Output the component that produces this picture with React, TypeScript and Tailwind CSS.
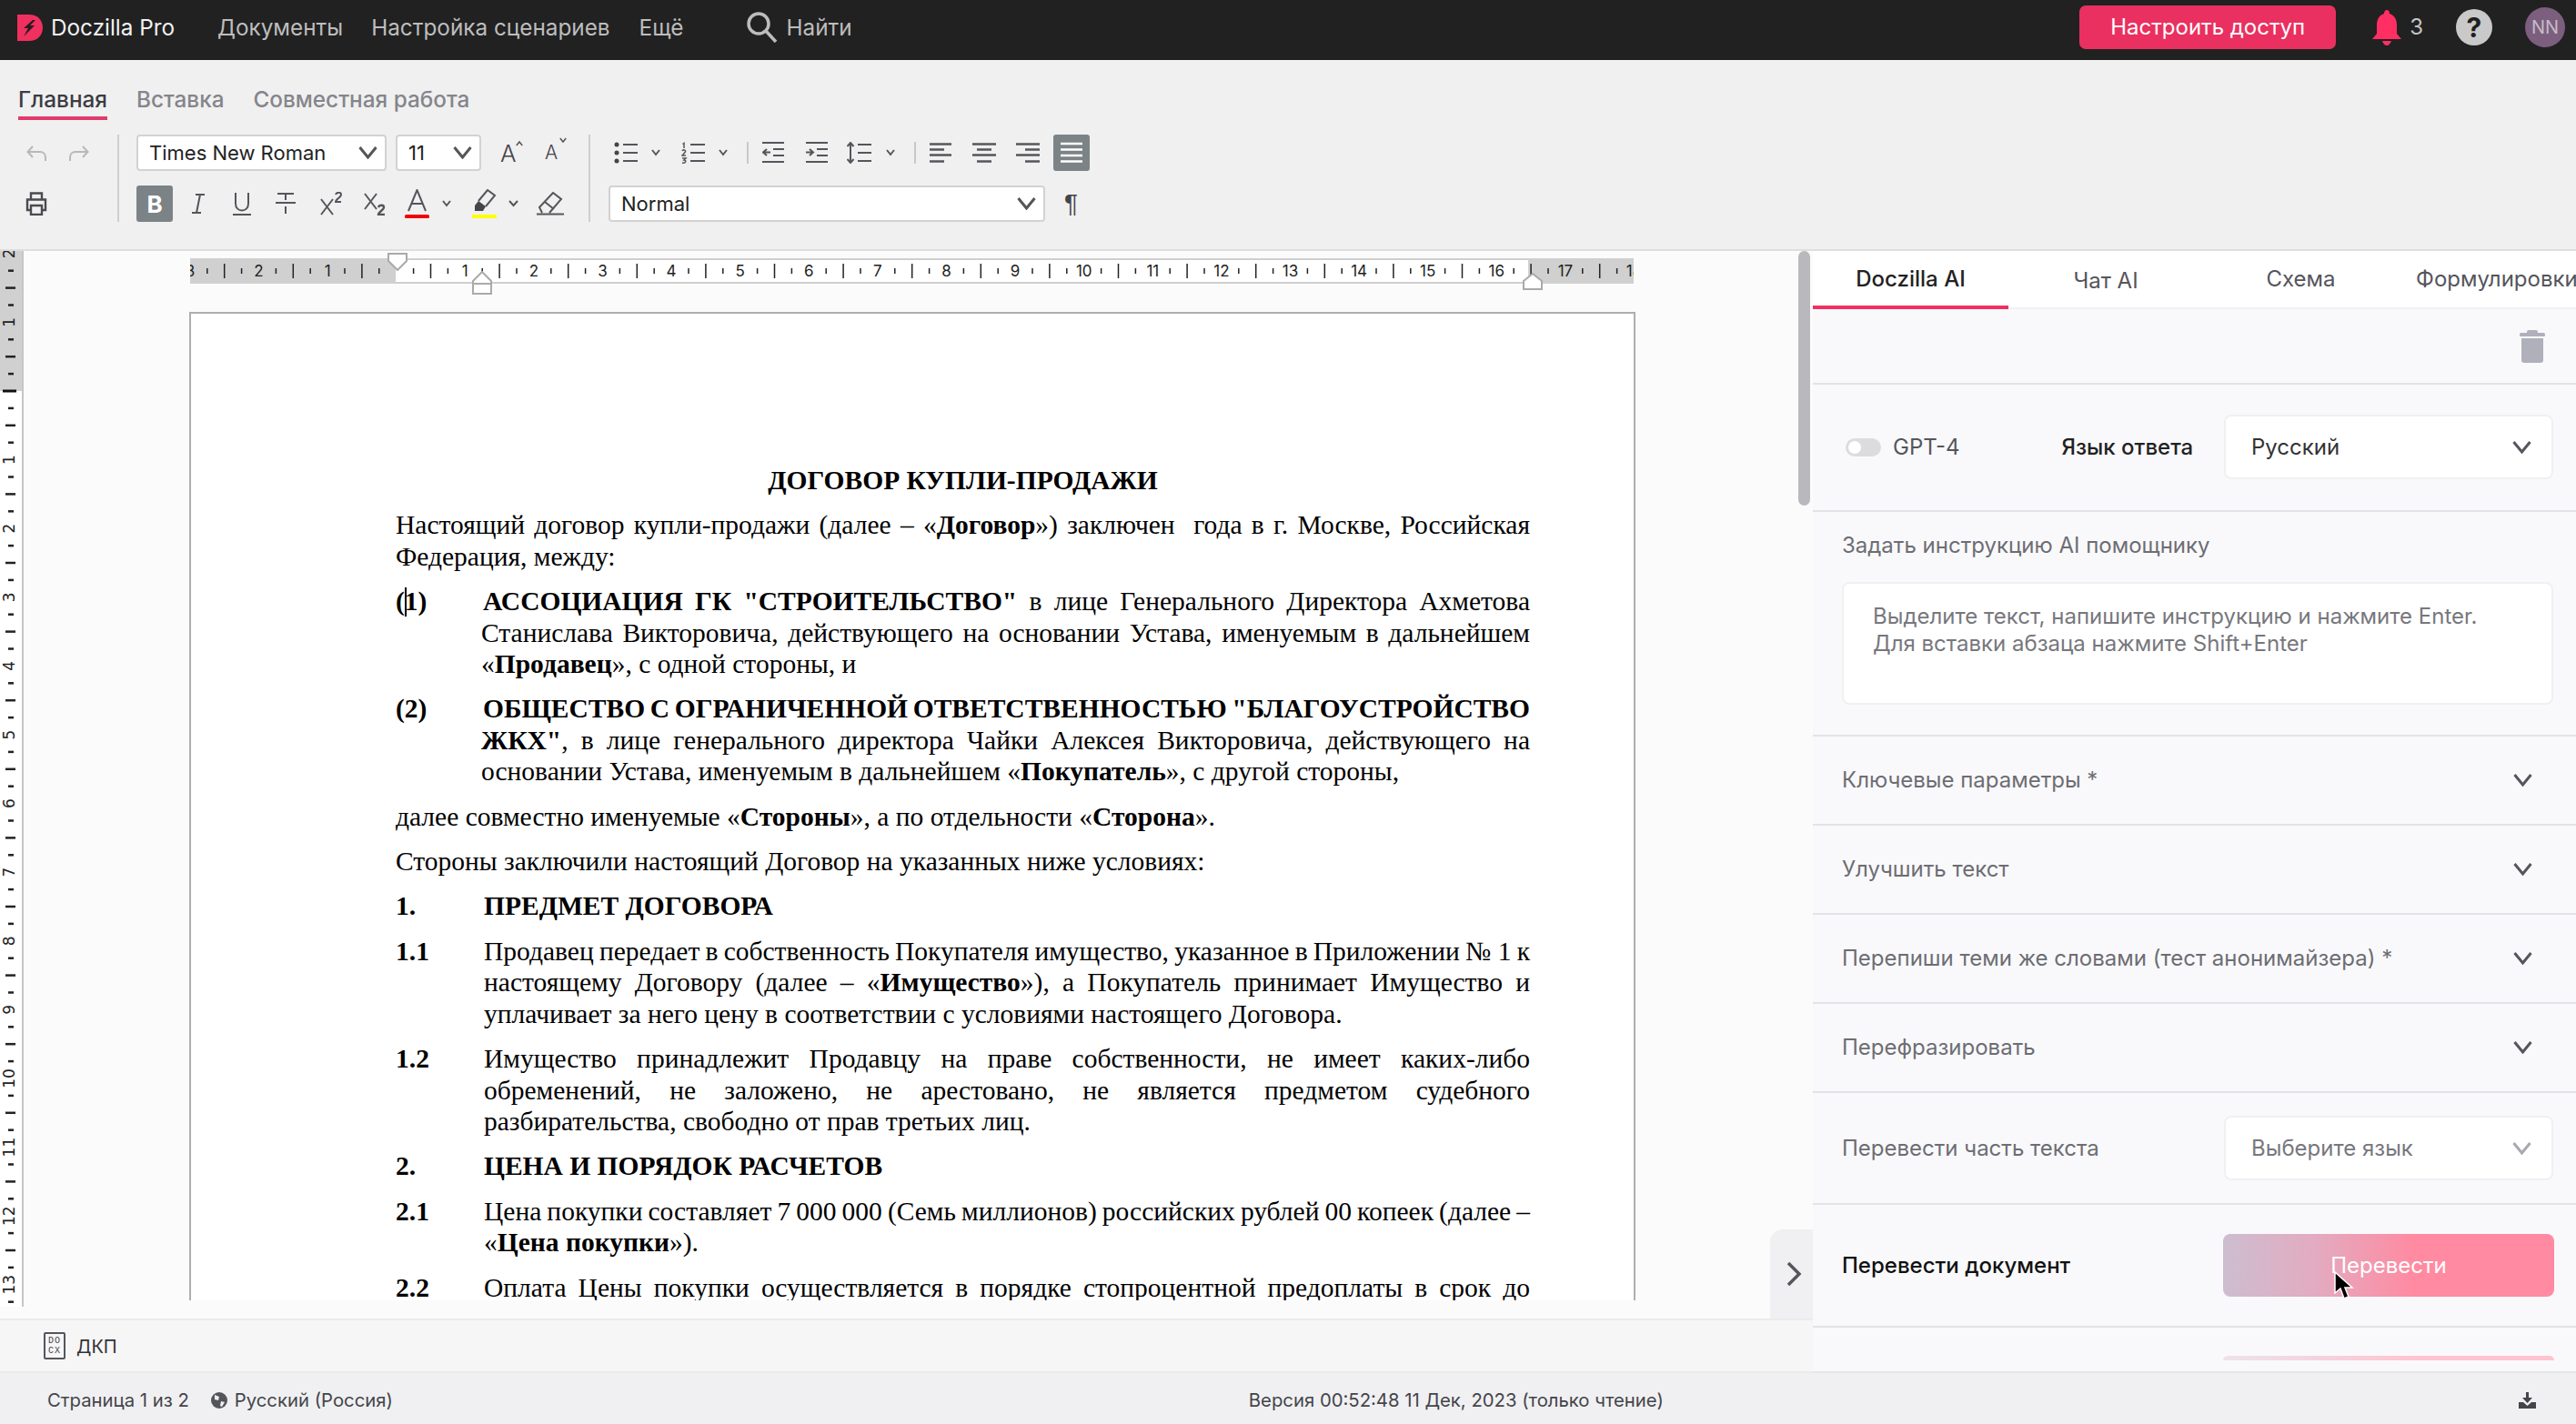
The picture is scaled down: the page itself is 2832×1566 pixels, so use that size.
import React from "react";

const Chev = ({ w = 10, h = 6, s = 2, c = "#555", className = "" }: { w?: number; h?: number; s?: number; c?: string; className?: string }) => (
  <svg width={w} height={h + 2} viewBox={`0 0 ${w} ${h + 2}`} className={className} fill="none">
    <path d={`M${s / 2} 1 L${w / 2} ${h} L${w - s / 2} 1`} stroke={c} strokeWidth={s} />
  </svg>
);

const Sel = ({ label, className = "" }: { label: string; className?: string }) => (
  <div className={`h-[40px] bg-white border-2 border-[#d2d2d2] rounded-[4px] flex items-center justify-between pl-[12px] pr-[8px] text-[22px] text-[#222] ${className}`}>
    <span>{label}</span>
    <Chev w={21} h={12} s={3} />
  </div>
);

const I = ({ w, h, ml, children, vb }: { w: number; h: number; ml: string; children: React.ReactNode; vb?: string }) => (
  <svg width={w} height={h} viewBox={vb ?? `0 0 ${w} ${h}`} fill="none" stroke="#55555c" strokeWidth="2" className={`shrink-0 ${ml}`}>
    {children}
  </svg>
);

const hTicks = () => {
  const out: React.ReactNode[] = [];
  const o = 226.7;
  for (let n = -3; n <= 18; n++) {
    const x = o + n * 75.6;
    if (n !== 0) {
      out.push(<text key={`n${n}`} x={x} y={20} textAnchor="middle" fontSize="17" fontFamily="Inter" fill="#222">{Math.abs(n)}</text>);
    }
    for (const f of [0.25, 0.5, 0.75]) {
      const tx = x + f * 75.6;
      const long = f === 0.5;
      out.push(<line key={`t${n}${f}`} x1={tx} x2={tx} y1={long ? 6 : 11} y2={long ? 22 : 17} stroke="#222" strokeWidth="1.5" />);
    }
  }
  return out;
};

const vTicks = () => {
  const out: React.ReactNode[] = [];
  const o = 154;
  for (let n = -2; n <= 14; n++) {
    const y = o + n * 75.6;
    if (n !== 0) {
      out.push(<text key={`n${n}`} x={0} y={0} transform={`translate(16 ${y}) rotate(-90)`} textAnchor="middle" fontSize="17" fontFamily="DejaVu Sans" fill="#222">{Math.abs(n)}</text>);
    } else {
      out.push(<line key="z" x1="3" x2="18" y1={y} y2={y} stroke="#111" strokeWidth="3" />);
    }
    for (const f of [0.25, 0.5, 0.75]) {
      const ty = y + f * 75.6;
      const long = f === 0.5;
      out.push(<line key={`t${n}${f}`} x1={long ? 6 : 9} x2={long ? 17 : 15} y1={ty} y2={ty} stroke="#222" strokeWidth="2.5" />);
    }
  }
  return out;
};

const J = ({ children }: { children: React.ReactNode }) => <div className="[text-align-last:justify] [word-spacing:-2.5px] whitespace-nowrap">{children}</div>;
const L = ({ children }: { children: React.ReactNode }) => <div className="whitespace-nowrap">{children}</div>;
const B = ({ children }: { children: React.ReactNode }) => <b className="font-bold">{children}</b>;

const Item = ({ n, wide = false, children }: { n: React.ReactNode; wide?: boolean; children: React.ReactNode }) => (
  <div className="flex mt-[15px]">
    <div className={`${wide ? "w-[97px]" : "w-[94px]"} shrink-0 font-bold`}>{n}</div>
    <div className="flex-1 min-w-0">{children}</div>
  </div>
);

const Acc = ({ label }: { label: string }) => (
  <div className="h-[98px] shrink-0 border-b-2 border-[#e3e3e7] flex items-center justify-between pl-[32px] pr-[48px] text-[24px] text-[#6d6d73]">
    <span>{label}</span>
    <Chev w={21} h={12} s={3} c="#55555c" />
  </div>
);

export default function App() {
  return (
    <div className="w-[2832px] h-[1566px] overflow-hidden flex flex-col bg-[#f0f0f2] [font-family:Inter,sans-serif] relative">
      {/* Header */}
      <header className="h-[66px] shrink-0 bg-[#212121] flex items-center pl-[19px] pr-[12px] pb-[6px]">
        <svg width="28" height="29" viewBox="0 0 28 29" className="shrink-0">
          <path d="M0 0 H13 C22 0 28 6 28 14.5 C28 23 22 29 13 29 H0 Z" fill="#f0305f" />
          <path d="M17 6 L7 15 L12 15 L7 24 L19 12 L14 12 L20 6 Z" fill="#2a1a1e" />
        </svg>
        <span className="ml-[9px] text-[24.3px] text-[#f2f2f2]">Doczilla Pro</span>
        <span className="ml-[47px] text-[24.3px] text-[#bdbdbd]">Документы</span>
        <span className="ml-[31px] text-[24.3px] text-[#bdbdbd]">Настройка сценариев</span>
        <span className="ml-[32px] text-[24.3px] text-[#bdbdbd]">Ещё</span>
        <svg width="36" height="34" viewBox="0 0 36 34" fill="none" stroke="#bdbdbd" strokeWidth="3.5" className="ml-[69px]">
          <circle cx="14" cy="13" r="11" />
          <path d="M22 21 L33 33" />
        </svg>
        <span className="ml-[8px] text-[24.3px] text-[#bdbdbd]">Найти</span>
        <div className="ml-auto h-[48px] w-[282px] bg-[#ea3060] rounded-[7px] flex items-center justify-center text-[24px] text-white">Настроить доступ</div>
        <svg width="32" height="39" viewBox="0 0 32 39" className="ml-[40px] shrink-0">
          <path d="M16 0 C18 0 19 2 19 4 C25 6 27 11 27 17 V26 L32 32 H0 L5 26 V17 C5 11 7 6 13 4 C13 2 14 0 16 0 Z" fill="#ff2f63" />
          <path d="M11 34 H21 C20 37 18 39 16 39 C14 39 12 37 11 34 Z" fill="#ff2f63" />
        </svg>
        <span className="ml-[9px] text-[24px] text-[#c4c4c4]">3</span>
        <div className="ml-[36px] w-[40px] h-[40px] rounded-full bg-[#c9c9c9] flex items-center justify-center text-[30px] font-bold text-[#1f1f1f]">?</div>
        <div className="ml-[36px] w-[44px] h-[44px] rounded-full bg-[#7c5e7f] flex items-center justify-center text-[20px] text-[#c4bcc6]">NN</div>
      </header>

      {/* Toolbar */}
      <div className="h-[210px] shrink-0 bg-[#f0f0f0] border-b-2 border-[#dedede] flex flex-col">
        <div className="flex pl-[20px] pt-[28px] text-[24.3px] text-[#85858c] font-medium leading-[30px]">
          <span className="pb-[4px] border-b-4 border-[#e13b6e] text-[#3c3c44]">Главная</span>
          <span className="ml-[32px]">Вставка</span>
          <span className="ml-[32px]">Совместная работа</span>
        </div>
        <div className="flex mt-[16px] h-[96px]">
          <div className="w-[129px] flex flex-col gap-[16px]">
            <div className="h-[40px] flex items-center">
              <I w={22} h={20} ml="ml-[29px]"><g stroke="#b8b8bc"><path d="M7 3 L1.5 9 L7 15 M2 9 H15 C19 9 21 12 21 15 V19" /></g></I>
              <I w={22} h={20} ml="ml-[25px]"><g stroke="#b8b8bc"><path d="M15 3 L20.5 9 L15 15 M20 9 H7 C3 9 1 12 1 15 V19" /></g></I>
            </div>
            <div className="h-[40px] flex items-center">
              <I w={24} h={26} ml="ml-[28px]">
                <path d="M6 8 V1.5 H18 V8 M6 20 H2 V8.5 H22 V20 H18 M6 15 H18 V25 H6 Z" strokeWidth="2.4" stroke="#4a4a50" />
              </I>
            </div>
          </div>
          <div className="w-[2px] bg-[#cfcfcf]" />
          <div className="ml-[19px] w-[497px] flex flex-col gap-[16px]">
            <div className="h-[40px] flex items-center">
              <Sel label="Times New Roman" className="w-[275px]" />
              <Sel label="11" className="w-[94px] ml-[10px]" />
              <span className="ml-[21px] relative text-[26px] font-light text-[#44444a] w-[23px]">A<Chev w={8} h={5} s={1.5} className="absolute top-[5px] right-[-2px] rotate-180" /></span>
              <span className="ml-[26px] relative text-[21px] font-light text-[#44444a] w-[26px]">A<Chev w={8} h={5} s={1.5} className="absolute top-[-1px] right-[2px]" /></span>
            </div>
            <div className="h-[40px] flex items-center">
              <div className="w-[40px] h-[40px] rounded-[3px] bg-[#7b8387] flex items-center justify-center text-[26px] font-bold text-white">B</div>
              <I w={16} h={22} ml="ml-[20px]"><path d="M5 1 H15 M1 21 H11 M10 1 L6 21" /></I>
              <I w={20} h={26} ml="ml-[30px]"><path d="M3 1 V13 C3 23 17 23 17 13 V1 M0 25 H20" /></I>
              <I w={22} h={24} ml="ml-[27px]"><path d="M2 1 H20 M11 1 V8 M0 11 H22 M11 15 V23" /></I>
              <I w={24} h={26} ml="ml-[27px]"><path d="M1 8 L14 25 M14 8 L1 25 M17 3 C18 0 23 0 23 3 C23 6 17 8 17 11 H23" /></I>
              <I w={24} h={26} ml="ml-[24px]"><path d="M1 2 L14 19 M14 2 L1 19" /><path d="M16 17 C17 14 22 14 22 17 C22 20 16 22 16 25 H23" strokeWidth="2.4" /></I>
              <svg width="27" height="32" viewBox="0 0 27 32" fill="none" className="ml-[21px] shrink-0">
                <path d="M4 24 L13.5 1 L23 24 M7 16 H20" stroke="#55555c" strokeWidth="2" />
                <rect x="0" y="28" width="27" height="4" rx="1.5" fill="#f00000" />
              </svg>
              <Chev className="ml-[14px]" w={10} h={6} />
              <svg width="27" height="32" viewBox="0 0 27 32" fill="none" className="ml-[23px] shrink-0">
                <path d="M7 13 L17 1 L25 7 L15 19" stroke="#55555c" strokeWidth="2" />
                <path d="M3 18 L7 13 L15 19 L12 24 H3 Z" fill="#44444a" />
                <rect x="0" y="28" width="27" height="4" rx="1" fill="#ffff00" />
              </svg>
              <Chev className="ml-[13px]" w={11} h={6} />
              <svg width="30" height="26" viewBox="0 0 30 26" fill="none" stroke="#55555c" strokeWidth="2" className="ml-[20px] shrink-0">
                <path d="M6 23 L3 17 L18 1 L27 8 L14 23 M9 11 L19 19 M0 24.5 H30" />
              </svg>
            </div>
          </div>
          <div className="w-[2px] bg-[#cfcfcf]" />
          <div className="ml-[20px] flex flex-col gap-[16px]">
            <div className="h-[40px] flex items-center">
              <I w={26} h={24} ml="ml-[6px]">
                <circle cx="3" cy="3" r="2.5" fill="#44444a" stroke="none" />
                <circle cx="3" cy="12" r="2.5" fill="#44444a" stroke="none" />
                <circle cx="3" cy="21" r="2.5" fill="#44444a" stroke="none" />
                <path d="M10 3 H26 M10 12 H26 M10 21 H26" />
              </I>
              <Chev className="ml-[15px]" w={10} h={6} />
              <svg width="26" height="24" viewBox="0 0 26 24" fill="none" stroke="#55555c" strokeWidth="2" className="ml-[23px] shrink-0">
                <path d="M10 3 H26 M10 12 H26 M10 21 H26" />
                <path d="M1.5 2.5 L3 1.5 V7" strokeWidth="1.5" />
                <path d="M1 10 C2 8 5 9 4.5 11 L1 15 H5" strokeWidth="1.5" />
                <path d="M1 18 H5 L3 20 C6 20 5 24 1 23" strokeWidth="1.5" />
              </svg>
              <Chev className="ml-[15px]" w={10} h={6} />
              <div className="ml-[21px] w-[2px] h-[24px] bg-[#c8c8c8]" />
              <I w={24} h={24} ml="ml-[15px]"><path d="M0 1 H24 M12 8 H24 M12 15 H24 M0 22 H24 M9 11.5 H1 M5 8 L1 11.5 L5 15" /></I>
              <I w={24} h={24} ml="ml-[24px]"><path d="M0 1 H24 M12 8 H24 M12 15 H24 M0 22 H24 M0 11.5 H8 M4 8 L8 11.5 L4 15" /></I>
              <I w={27} h={24} ml="ml-[21px]"><path d="M4 1 V23 M0.5 5 L4 1 L7.5 5 M0.5 19 L4 23 L7.5 19 M12 3 H27 M12 12 H27 M12 21 H27" /></I>
              <Chev className="ml-[16px]" w={10} h={6} />
              <div className="ml-[21px] w-[2px] h-[24px] bg-[#c8c8c8]" />
              <I w={24} h={22} ml="ml-[15px]"><g strokeWidth="2.5"><path d="M0 1.5 H24 M0 7.5 H16 M0 13.5 H24 M0 20.5 H16" /></g></I>
              <I w={26} h={22} ml="ml-[23px]"><g strokeWidth="2.5"><path d="M0 1.5 H26 M5 7.5 H21 M0 13.5 H26 M5 20.5 H21" /></g></I>
              <I w={26} h={22} ml="ml-[22px]"><g strokeWidth="2.5"><path d="M0 1.5 H26 M10 7.5 H26 M0 13.5 H26 M10 20.5 H26" /></g></I>
              <div className="ml-[15px] w-[40px] h-[40px] rounded-[3px] bg-[#7b8387] flex items-center justify-center">
                <svg width="24" height="24" viewBox="0 0 24 24" fill="none" stroke="#fff" strokeWidth="2.5"><path d="M0 2 H24 M0 8.5 H24 M0 15 H24 M0 21.5 H24" /></svg>
              </div>
            </div>
            <div className="h-[40px] flex items-center">
              <Sel label="Normal" className="w-[480px]" />
              <span className="ml-[21px] text-[28px] text-[#44444a] [font-family:'Liberation_Sans',sans-serif]">¶</span>
            </div>
          </div>
        </div>
      </div>

      {/* Main */}
      <div className="flex-1 min-h-0 flex">
        <div className="flex-1 min-w-0 flex flex-col relative">
          <div className="flex-1 min-h-0 bg-[#fbfbfb] flex">
            <div className="w-[26px] shrink-0 h-[1161px] border-r-2 border-[#c6c6c6] relative overflow-hidden bg-white">
              <div className="h-[154px] bg-[#d0d0d0]" />
              <svg width="24" height="1161" className="absolute top-0 left-0">{vTicks()}</svg>
            </div>
            <div className="flex-1 min-w-0 pl-[182px] flex flex-col">
              <div className="mt-[8px] ml-[1px] w-[1587px] h-[28px] relative bg-white border-y-2 border-[#cfcfcf] shrink-0">
                <div className="absolute left-0 top-[-2px] w-[226px] h-[28px] bg-[#d0d0d0]" />
                <div className="absolute right-0 top-[-2px] w-[116px] h-[28px] bg-[#d0d0d0]" />
                <svg width="1587" height="28" className="absolute left-0 top-[-2px]">{hTicks()}</svg>
                <svg width="22" height="20" viewBox="0 0 22 20" className="absolute left-[217px] top-[-8px]"><path d="M1 1 H21 V9 L11 19 L1 9 Z" fill="#fff" stroke="#aaa" strokeWidth="2" /></svg>
                <svg width="22" height="26" viewBox="0 0 22 26" className="absolute left-[310px] top-[12px]"><path d="M1 11 L11 1 L21 11 V25 H1 Z M1 14 H21" fill="#fff" stroke="#aaa" strokeWidth="2" /></svg>
                <svg width="22" height="19" viewBox="0 0 22 19" className="absolute left-[1465px] top-[14px]"><path d="M1 9 L11 1 L21 9 V18 H1 Z" fill="#fff" stroke="#aaa" strokeWidth="2" /></svg>
              </div>
              <div className="mt-[31px] w-[1590px] flex-1 min-h-0 overflow-hidden flex flex-col">
                <div className="h-[1088px] shrink-0 bg-white border-2 border-b-0 border-[#aeaeae] pl-[225px] pr-[114px] pt-[166px] overflow-hidden [font-family:'Liberation_Serif',serif] text-[29.5px] leading-[34.4px] text-black">
                  <div className="text-center font-bold">ДОГОВОР КУПЛИ-ПРОДАЖИ</div>
                  <div className="mt-[15px]">
                    <J>Настоящий договор купли-продажи (далее – «<B>Договор</B>») заключен&nbsp; года в г. Москве, Российская</J>
                    <L>Федерация, между:</L>
                  </div>
                  <Item n={<>(<span className="relative"><span className="absolute left-0 top-[1px] h-[32px] w-[2px] bg-black" /></span>1)</>}>
                    <J><span className="pl-[2px]" /><B>АССОЦИАЦИЯ ГК "СТРОИТЕЛЬСТВО"</B> в лице Генерального Директора Ахметова</J>
                    <J>Станислава Викторовича, действующего на основании Устава, именуемым в дальнейшем</J>
                    <L>«<B>Продавец</B>», с одной стороны, и</L>
                  </Item>
                  <Item n="(2)">
                    <J><span className="pl-[2px]" /><B>ОБЩЕСТВО С ОГРАНИЧЕННОЙ ОТВЕТСТВЕННОСТЬЮ "БЛАГОУСТРОЙСТВО</B></J>
                    <J><B>ЖКХ"</B>, в лице генерального директора Чайки Алексея Викторовича, действующего на</J>
                    <L>основании Устава, именуемым в дальнейшем «<B>Покупатель</B>», с другой стороны,</L>
                  </Item>
                  <div className="mt-[15px] whitespace-nowrap">далее совместно именуемые «<B>Стороны</B>», а по отдельности «<B>Сторона</B>».</div>
                  <div className="mt-[15px] whitespace-nowrap">Стороны заключили настоящий Договор на указанных ниже условиях:</div>
                  <Item wide n="1."><B>ПРЕДМЕТ ДОГОВОРА</B></Item>
                  <Item wide n="1.1">
                    <J>Продавец передает в собственность Покупателя имущество, указанное в Приложении № 1 к</J>
                    <J>настоящему Договору (далее – «<B>Имущество</B>»), а Покупатель принимает Имущество и</J>
                    <L>уплачивает за него цену в соответствии с условиями настоящего Договора.</L>
                  </Item>
                  <Item wide n="1.2">
                    <J>Имущество принадлежит Продавцу на праве собственности, не имеет каких-либо</J>
                    <J>обременений, не заложено, не арестовано, не является предметом судебного</J>
                    <L>разбирательства, свободно от прав третьих лиц.</L>
                  </Item>
                  <Item wide n="2."><B>ЦЕНА И ПОРЯДОК РАСЧЕТОВ</B></Item>
                  <Item wide n="2.1">
                    <J>Цена покупки составляет 7 000 000 (Семь миллионов) российских рублей 00 копеек (далее –</J>
                    <L>«<B>Цена покупки</B>»).</L>
                  </Item>
                  <Item wide n="2.2">
                    <J>Оплата Цены покупки осуществляется в порядке стопроцентной предоплаты в срок до</J>
                  </Item>
                </div>
              </div>
              <div className="h-[20px] shrink-0" />
            </div>
          </div>
          {/* Scrollbar thumb */}
          <div className="absolute left-[1977px] top-0 w-[13px] h-[280px] rounded-full bg-[#b9b9bd]" />
          {/* Collapse handle */}
          <div className="absolute left-[1946px] top-[1076px] w-[47px] h-[98px] rounded-tl-[14px] bg-[#f0f0f2] flex items-center justify-center">
            <svg width="17" height="28" viewBox="0 0 17 28" fill="none" stroke="#55555c" strokeWidth="3.5" className="ml-[6px]"><path d="M2 2 L14 14 L2 26" /></svg>
          </div>
          {/* Document tabs */}
          <div className="h-[60px] shrink-0 bg-[#f6f6f7] border-y-2 border-[#ebebec] flex items-center pl-[48px]">
            <div className="w-[24px] h-[30px] border-2 border-[#55555c] rounded-[2px] flex flex-col items-center justify-center text-[10px] leading-[11px] tracking-[1px] text-[#44444a] [font-family:'Liberation_Mono',monospace]">
              <span>DO</span>
              <span>CX</span>
            </div>
            <span className="ml-[12px] text-[20px] text-[#333] pt-[2px]">ДКП</span>
          </div>
        </div>

        {/* Right panel */}
        <aside className="w-[839px] shrink-0 bg-[#f9f9fb] border-b-2 border-[#e6e6e8] flex flex-col relative overflow-hidden">
          <div className="h-[64px] shrink-0 bg-white border-b-2 border-[#f2f2f4] flex whitespace-nowrap text-[24px] text-[#55555c]">
            <div className="w-[215px] shrink-0 h-[64px] border-b-4 border-[#f0305f] flex items-center justify-center text-[#222] font-medium pt-[2px]">Doczilla AI</div>
            <div className="w-[214px] shrink-0 flex items-center justify-center pt-[3px]">Чат AI</div>
            <div className="w-[215px] shrink-0 flex items-center justify-center">Схема</div>
            <div className="pl-[19px] flex items-center">Формулировки</div>
          </div>
          <div className="h-[83px] shrink-0 border-b-2 border-[#e3e3e7] flex justify-end items-start pt-[23px] pr-[34px]">
            <svg width="28" height="36" viewBox="0 0 28 36" fill="#b0b0ba">
              <rect x="0" y="3" width="28" height="4" rx="1.5" />
              <rect x="8" y="0" width="12" height="5" rx="2" />
              <path d="M2 9 H26 V33 C26 35 25 36 23 36 H5 C3 36 2 35 2 33 Z" />
            </svg>
          </div>
          <div className="h-[140px] shrink-0 border-b-2 border-[#e3e3e7] pt-[33px] pr-[25px] pl-[36px] flex items-start">
            <div className="h-[71px] flex items-center">
              <div className="w-[39px] h-[20px] rounded-full bg-[#dcdcdf] flex items-center pl-[3px]"><div className="w-[14px] h-[14px] rounded-full bg-white" /></div>
              <span className="ml-[13px] text-[24px] text-[#55555c]">GPT-4</span>
              <span className="ml-[112px] text-[24px] text-[#222] font-medium whitespace-nowrap">Язык ответа</span>
            </div>
            <div className="ml-auto w-[362px] h-[71px] bg-white border-2 border-[#f0f0f2] rounded-[8px] flex items-center justify-between pl-[28px] pr-[22px] text-[24px] text-[#333]">
              <span>Русский</span>
              <Chev w={21} h={12} s={3} c="#55555c" />
            </div>
          </div>
          <div className="h-[247px] shrink-0 border-b-2 border-[#e3e3e7] pl-[32px] pr-[25px] pt-[22px]">
            <div className="text-[24px] leading-[30px] text-[#6d6d73]">Задать инструкцию AI помощнику</div>
            <div className="mt-[25px] h-[135px] bg-white border-2 border-[#f0f0f2] rounded-[8px] pl-[32px] pt-[21px] text-[24px] leading-[30px] text-[#77777d]">
              <div>Выделите текст, напишите инструкцию и нажмите Enter.</div>
              <div>Для вставки абзаца нажмите Shift+Enter</div>
            </div>
          </div>
          <Acc label="Ключевые параметры *" />
          <Acc label="Улучшить текст" />
          <Acc label="Перепиши теми же словами (тест анонимайзера) *" />
          <Acc label="Перефразировать" />
          <div className="h-[123px] shrink-0 border-b-2 border-[#e3e3e7] flex items-center justify-between pl-[32px] pr-[25px] text-[24px] text-[#6d6d73]">
            <span>Перевести часть текста</span>
            <div className="w-[362px] h-[71px] bg-white border-2 border-[#f0f0f2] rounded-[8px] flex items-center justify-between pl-[28px] pr-[22px] text-[#77777d]">
              <span>Выберите язык</span>
              <Chev w={21} h={12} s={3} c="#a8a8ae" />
            </div>
          </div>
          <div className="h-[135px] shrink-0 border-b-2 border-[#e3e3e7] flex items-center justify-between pl-[32px] pr-[24px] text-[24px] text-[#111]">
            <span className="font-medium">Перевести документ</span>
            <div className="w-[364px] h-[69px] rounded-[8px] bg-[linear-gradient(90deg,#cdbdd0_0%,#e3abc0_28%,#ff8aa1_58%)] flex items-center justify-center text-white">Перевести</div>
          </div>
          <div className="pt-[31px] pl-[451px] pr-[24px]">
            <div className="h-[5px] rounded-t-[8px] bg-[linear-gradient(90deg,#eee3ea_0%,#f4d3de_28%,#ffc4d0_58%)]" />
          </div>
          {/* Mouse cursor */}
          <svg width="24" height="32" viewBox="0 0 24 32" className="absolute left-[573px] top-[1122px]">
            <path d="M1 1 V24 L7 19 L11 30 L16 28 L12 18 L20 18 Z" fill="#000" stroke="#fff" strokeWidth="1.5" />
          </svg>
        </aside>
      </div>

      {/* Status bar */}
      <footer className="h-[56px] shrink-0 bg-[#f0f0f2] flex items-center pl-[52px] pr-[44px] pt-[4px] text-[20.3px] text-[#44444a] relative">
        <span>Страница 1 из 2</span>
        <svg width="18" height="18" viewBox="0 0 18 18" className="ml-[24px]">
          <circle cx="9" cy="9" r="9" fill="#55555c" />
          <path d="M4 3 L9 5 L8 9 L4 8 Z M11 10 L15 11 L12 16 L10 15 Z" fill="#f0f0f2" />
        </svg>
        <span className="ml-[8px]">Русский (Россия)</span>
        <span className="ml-[941px]">Версия 00:52:48 11 Дек, 2023 (только чтение)</span>
        <svg width="19" height="18" viewBox="0 0 19 18" className="ml-auto" fill="#44444a">
          <path d="M8 0 H11 V6 H15 L9.5 12 L4 6 H8 Z" />
          <path d="M0 11 H5 L9.5 15 L14 11 H19 V18 H0 Z" />
        </svg>
      </footer>
    </div>
  );
}
